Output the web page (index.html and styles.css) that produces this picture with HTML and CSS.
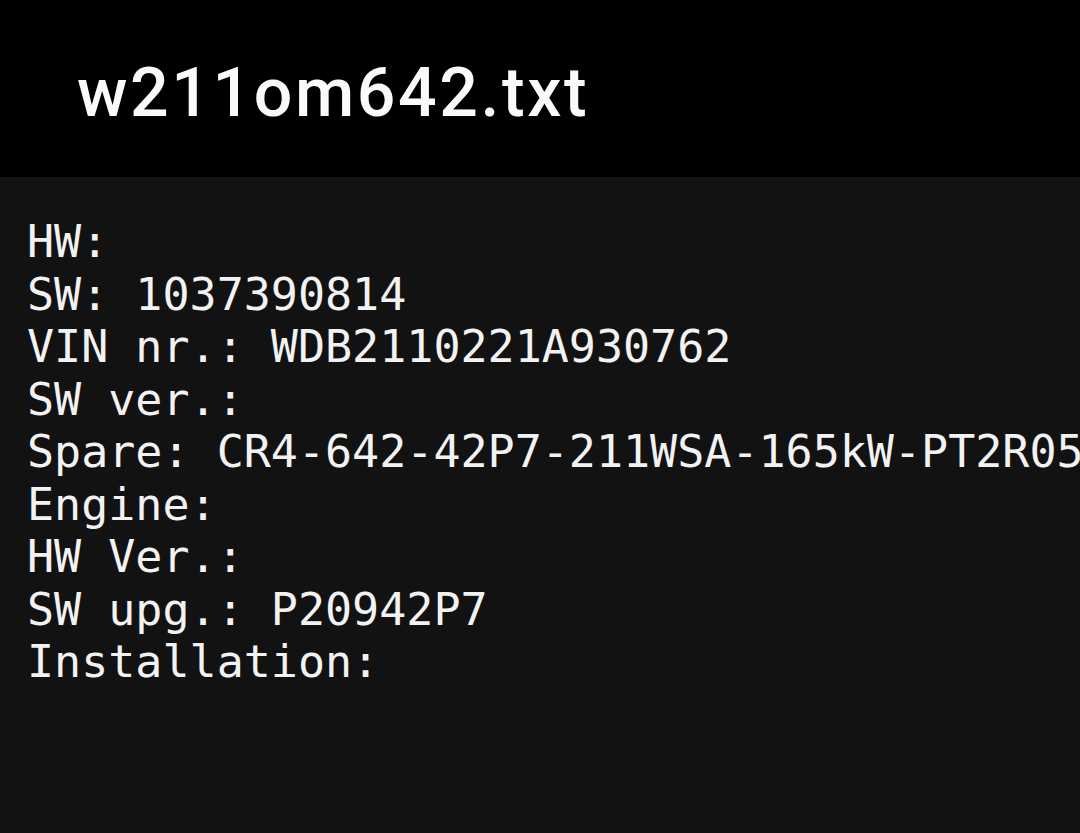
FILE: index.html
```html
<!DOCTYPE html>
<html>
<head>
<meta charset="utf-8">
<link rel="stylesheet" href="styles.css">
</head>
<body>
<header class="appbar"><h1 class="title">w211om642.txt</h1></header>
<main class="content"><pre class="file">HW:
SW: 1037390814
VIN nr.: WDB2110221A930762
SW ver.:
Spare: CR4-642-42P7-211WSA-165kW-PT2R05
Engine:
HW Ver.:
SW upg.: P20942P7
Installation:</pre></main>
</body>
</html>
```
FILE: styles.css
```css
html, body {
  margin: 0;
  padding: 0;
  width: 1080px;
  height: 833px;
  overflow: hidden;
  background: #121212;
}
.appbar {
  height: 177px;
  background: #000;
  display: flex;
  align-items: center;
  padding: 8px 0 0 77px;
  box-sizing: border-box;
}
.title {
  margin: 0;
  font-family: Roboto, "Noto Sans", sans-serif;
  font-weight: 500;
  font-size: 68px;
  color: #fafafa;
  letter-spacing: 2.6px;
}
.content {
  padding: 39px 0 0 27px;
}
.file {
  margin: 0;
  font-family: "DejaVu Sans Mono", monospace;
  font-size: 45px;
  line-height: 52.5px;
  color: #f2f2f2;
  white-space: pre;
  overflow: hidden;
}
```
